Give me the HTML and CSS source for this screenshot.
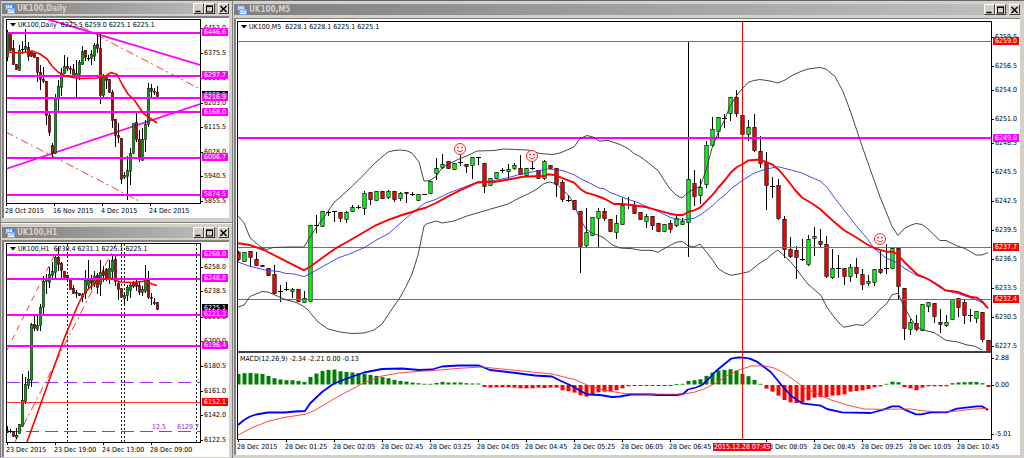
FILE: index.html
```html
<!DOCTYPE html>
<html lang="en">
<head>
<meta charset="utf-8">
<title>UK100 charts</title>
<link rel="stylesheet" href="styles.css">
</head>
<body>
<svg class="symbols" aria-hidden="true">
  <symbol id="app" viewBox="0 0 10 10"><rect width="8" height="6" fill="#5c98ea"/><rect x="1" y="1.500" width="6" height="3.500" fill="#eef5ff"/><path d="M1 4l2-1.500 1 1 2-1.500" stroke="#5c98ea" stroke-width=".7" fill="none"/><rect x="2" y="4" width="8" height="6" fill="#6ba5f0"/><rect x="3" y="5.500" width="6" height="3.500" fill="#f5f9ff"/><path d="M3 8l1.500-1.500 1.200 1.500 1.500-2 1 1.500" stroke="#4a8ade" stroke-width=".7" fill="none"/></symbol>
  <symbol id="min" viewBox="0 0 9 8"><path d="M1.500 6.500h5" stroke="#000" stroke-width="1.500"/></symbol>
  <symbol id="max" viewBox="0 0 9 8"><path d="M1 1.200h7" stroke="#000" stroke-width="1.600"/><rect x="1.500" y="1.500" width="6" height="5.500" stroke="#000" fill="none"/></symbol>
  <symbol id="close" viewBox="0 0 9 8"><path d="M1.500 1l6 6M7.500 1l-6 6" stroke="#000" stroke-width="1.400"/></symbol>
  <symbol id="drop" viewBox="0 0 6 4"><path d="M0 0h6L3 3.500z"/></symbol>
</svg>
<main class="desktop">
  <section class="window daily" aria-labelledby="t-daily">
    <header class="titlebar">
      <svg class="app-icon"><use href="#app"/></svg>
      <h2 class="title" id="t-daily">UK100,Daily</h2>
      <button class="control" aria-label="Minimize"><svg><use href="#min"/></svg></button>
      <button class="control" aria-label="Maximize"><svg><use href="#max"/></svg></button>
      <button class="control close" aria-label="Close"><svg><use href="#close"/></svg></button>
    </header>
    <div class="client" data-chart="daily">
      <div class="plot">
        <svg class="pane price" preserveAspectRatio="none"></svg>
        <p class="legend"><svg class="drop"><use href="#drop"/></svg>UK100,Daily&nbsp; 6225.5 6259.0 6225.1 6225.1</p>
      </div>
      <div class="scale"></div>
      <div class="times"></div>
    </div>
  </section>
  <section class="window hourly" aria-labelledby="t-h1">
    <header class="titlebar">
      <svg class="app-icon"><use href="#app"/></svg>
      <h2 class="title" id="t-h1">UK100,H1</h2>
      <button class="control" aria-label="Minimize"><svg><use href="#min"/></svg></button>
      <button class="control" aria-label="Maximize"><svg><use href="#max"/></svg></button>
      <button class="control close" aria-label="Close"><svg><use href="#close"/></svg></button>
    </header>
    <div class="client" data-chart="hourly">
      <div class="plot">
        <svg class="pane price" preserveAspectRatio="none"></svg>
        <p class="legend"><svg class="drop"><use href="#drop"/></svg>UK100,H1&nbsp; 6230.4 6231.1 6225.1 6225.1</p>
        <p class="note"><span>12.5</span><span>6129.7</span></p>
      </div>
      <div class="scale"></div>
      <div class="times"></div>
    </div>
  </section>
  <section class="window main" aria-labelledby="t-m5">
    <header class="titlebar">
      <svg class="app-icon"><use href="#app"/></svg>
      <h2 class="title" id="t-m5">UK100,M5</h2>
      <button class="control" aria-label="Minimize"><svg><use href="#min"/></svg></button>
      <button class="control" aria-label="Maximize"><svg><use href="#max"/></svg></button>
      <button class="control close" aria-label="Close"><svg><use href="#close"/></svg></button>
    </header>
    <div class="client" data-chart="five">
      <div class="plot">
        <svg class="pane price" preserveAspectRatio="none"></svg>
        <p class="legend"><svg class="drop"><use href="#drop"/></svg>UK100,M5&nbsp; 6228.1 6228.1 6225.1 6225.1</p>
        <div class="indicator">
          <svg class="pane macd" preserveAspectRatio="none"></svg>
          <p class="macd-label">MACD(12,26,9) -2.34 -2.21 0.00 -0.13</p>
        </div>
      </div>
      <div class="scale"></div>
      <div class="times"></div>
    </div>
  </section>
</main>
<script src="charts.js"></script>
</body>
</html>
```
FILE: styles.css
```css
* { box-sizing: border-box; }
body {
  margin: 0;
  background: #d4d0c8;
  color: #000;
  font: 7px/8px "DejaVu Sans Condensed", "DejaVu Sans", sans-serif;
}
p, h2 { margin: 0; }
.symbols { position: absolute; width: 0; height: 0; }
.desktop {
  display: grid;
  grid-template-columns: 232fr 792fr;
  grid-template-rows: 223fr 235fr;
  min-width: 600px;
  height: 100vh;
  min-height: 360px;
}
.window {
  display: flex;
  flex-direction: column;
  min-width: 0;
  min-height: 0;
  padding: 3px 3px 5px 2px;
  gap: 2px;
  background: #d4d0c8;
}
.daily, .main { box-shadow: inset 0 1px #6b6769; }
.daily, .hourly { border-left: 1px solid #808080; padding-left: 1px; }
.hourly { padding-top: 4px; padding-bottom: 1px; box-shadow: inset 0 1px #f4f2ee; }
.daily { border-bottom: 1px solid #808080; padding-bottom: 4px; }
.main { grid-column: 2; grid-row: 1 / 3; padding: 4px 4px 3px 2px; gap: 3px; box-shadow: inset 0 1px #6b6769, inset 1px 0 #808080; }

.titlebar {
  display: flex;
  align-items: center;
  flex: none;
  height: 11px;
  padding-left: 3px;
  background: linear-gradient(90deg, #808080, #c0c0c0);
}
.app-icon { width: 10px; height: 10px; margin-right: 2px; }
.title {
  flex: 1;
  color: #d4d0c8;
  font-size: 8px;
  line-height: 11px;
  font-weight: bold;
  white-space: nowrap;
}
.control {
  width: 11px;
  height: 11px;
  padding: 0;
  border: 1px solid;
  border-color: #fff #404040 #404040 #fff;
  background: #d4d0c8;
  display: grid;
  place-items: center;
}
.control svg { width: 9px; height: 8px; }
.control.close { margin-left: 3px; }

.client {
  flex: 1;
  min-height: 0;
  display: grid;
  grid-template-columns: minmax(0, 1fr) 28px;
  grid-template-rows: minmax(0, 1fr) 14px;
  padding: 1px 0 0 2px;
  border: solid #808080;
  border-width: 2px 0 0 2px;
  background: #fff;
}
.main .client {
  grid-template-rows: minmax(0, 1fr) 15px;
  border-top-width: 1px;
  padding: 2px 0 0 1px;
}
.plot {
  position: relative;
  display: grid;
  grid-template-rows: minmax(0, 1fr);
  border: 1px solid #000;
}
.main .plot { grid-template-rows: minmax(0, 329fr) minmax(0, 88fr); }
.pane { display: block; width: 100%; height: 100%; min-height: 0; }
.indicator { position: relative; min-height: 0; border-top: 2px solid #404040; }
.legend {
  position: absolute;
  top: 1px;
  left: 3px;
  display: flex;
  align-items: center;
  gap: 2px;
  white-space: nowrap;
}
.drop { width: 6px; height: 4px; }
.macd-label { position: absolute; top: 2px; left: 2px; white-space: nowrap; }
.note {
  position: absolute;
  right: 1px;
  bottom: 11px;
  display: flex;
  gap: 11px;
  color: #9c27d8;
}

.scale, .times { position: relative; }
.times { grid-column: 1 / 3; }
.tick, .tag, .time, .marker { position: absolute; white-space: nowrap; }
.tick, .tag { height: 8px; margin-top: -4px; }
.tick { left: 3px; }
.tick::before { content: ""; position: absolute; left: -3px; top: 4px; width: 2px; height: 1px; background: #000; }
.tag { left: 1px; width: 26px; padding-left: 2px; color: #fff; }
.tag-red { background: #f00; }
.tag-magenta { background: #f0f; }
.tag-black { background: #000; }
.time { top: 3px; margin-left: -1px; }
.time::before { content: ""; position: absolute; left: 1px; top: -3px; width: 1px; height: 2px; background: #000; }
.marker { top: 3px; height: 8px; padding: 0 1px; background: #f00; color: #fff; }

.wick { stroke: #000; stroke-width: 1; shape-rendering: crispEdges; }
.body-r { fill: #f00; stroke: #100; stroke-width: .7; }
.body-g { fill: #0f1; stroke: #010; stroke-width: .7; }
.daily-c .body-r, .hourly-c .body-r { fill: #b00a0a; stroke-width: .5; }
.daily-c .body-g, .hourly-c .body-g { fill: #0a9a14; stroke-width: .5; }
.line { fill: none; stroke-linejoin: round; }
.level { shape-rendering: crispEdges; }
.band { stroke: #333; stroke-width: .9; }
.slow { stroke: #33f; stroke-width: .9; }
.average { stroke: #f00; stroke-width: 1.9; }
.daily-c .average, .hourly-c .average { stroke-width: 1.6; }
.signal { stroke: #f33; stroke-width: .9; }
.force { stroke: #00f; stroke-width: 1.8; }
.smile { fill: #fff; stroke: #f22; stroke-width: 1; }
.smile-mouth { fill: none; stroke: #f22; stroke-width: 1; }
.smile-eye { fill: #f22; }
```
FILE: charts.js
```js
// Candles: colour, body top, body bottom, and optionally wick top and wick bottom.
const charts = {
  daily: {
    cls: 'daily-c', view: [7, 20, 193, 183], start: 7, step: 3, body: 2.4,
    candles: 'g 32 57 30 60;r 32 50;r 48 64 40 64;r 64 69;g 50 70 45 70;d 49 49 41 53;g 46 49 29 52;r 47 56 42 60;r 51 56;r 53 57;r 57 72 57 81;r 72 79 65 89;r 79 81 67 82;r 81 115 81 124;r 115 132 112 135;r 145 153 143 156;g 98 153 94 153;g 86 99 80 110;g 73 87 68 95;g 66 73 55 73;r 66 68 57 70;r 68 69 66 73;r 69 77 64 77;g 73 77 60 97;g 62 74 60 79;g 51 64 46 64;r 50 57 50 60;d 58 58 55 60;g 54 58 50 64;g 45 56 43 60;r 44 48 34 52;r 48 95 32 103;g 77 95 74 97;r 76 80 76 88;r 79 92;r 92 120 90 127;r 119 135 119 146;r 135 137 123 142;r 138 179 138 183;g 175 177 172 178;g 170 176 156 199;g 153 171 148 184;g 123 153;r 122 139 112 141;r 139 159 130 161;g 139 160 128 160;g 124 139 120 151;g 88 124 83 126;r 88 91 84 96;r 91 92 88 94;r 92 96 86 96',
    under: [
      ['M47 19L200 65', '#f0f', 1.8], ['M6 169L200 104', '#f0f', 1.8],
      ['M66 19L200 89', '#f33', 1, '8 3 2 4'], ['M6 132L139 201', '#f33', 1, '8 3 2 4']
    ],
    levels: [[32, '#f0f', 2], [75, '#f0f', 2], [97, '#f0f', 2], [111, '#f0f', 2], [157, '#f0f', 2], [194, '#f0f', 2]],
    lines: [['average', '7,52 20,53 32,51 40,54 47,59 52,66 58,72 65,76 80,78.5 97,78 105,76.5 111,72.5 117,74.5 123,86 128,94 135,101 143,113 147,116 157,123']],
    scale: [[28, '6453.0'], [53, '6375.5'], [78, '6290.5'], [103, '6203.0'], [127, '6115.5'], [152, '6028.0'], [176, '5940.5'], [201, '5855.5'],
      [95, '6225.1', 'black'], [32, '6446.6', 'magenta'], [75, '6297.7', 'magenta'], [97, '6216.9', 'magenta'], [112, '6168.0', 'magenta'], [157, '6006.7', 'magenta'], [194, '5874.5', 'magenta']],
    times: [[6, '28 Oct 2015'], [54, '16 Nov 2015'], [102, '4 Dec 2015'], [150, '24 Dec 2015']]
  },
  hourly: {
    cls: 'hourly-c', view: [7, 244, 193, 198], start: 7, step: 3, body: 2.4,
    candles: 'r 430 432 426 432;d 431 431 429 432;r 431 436;g 435 437 428 438;g 424 433;g 400 426 374 426;g 384 401 377 403;g 379 385 371 388;g 324 380 323 386;r 324 328 316 330;g 325 329 314 330;g 307 325 304 330;g 281 307 276 314;g 278 281 274 293;g 274 282 267 287;g 271 275 262 278;g 257 272 254 277;r 257 264 247 270;r 263 270 262 278;r 271 277;r 275 279;r 279 289;r 288 293 285 293;r 292 293 290 297;r 293 295;g 294 297 293 301;g 280 293 270 298;g 280 285 260 289;r 278 283 275 289;g 276 284 271 286;r 275 287 273 293;g 272 284 260 295;r 271 275 266 281;r 269 279 268 280;g 268 279 260 283;g 260 271 255 277;r 259 281 254 285;r 283 289 281 299;r 288 297;g 295 298 292 304;g 287 295 285 300;g 285 290 283 297;r 283 286 281 287;r 282 286 280 290;r 285 292 282 294;g 289 292 286 295;g 279 291 265 292;r 280 297 271 298;r 297 298 293 304;r 302 303 298 304;r 302 309',
    under: [
      ['M67.500 244V442M121.500 244V442M124.500 244V442M196.500 244V442', '#222', 1, '2 2'],
      ['M7 350L60 244', '#f33', 1, '6 5'], ['M15 442L116 244', '#f33', 1, '8 4 2 4'],
      ['M7 382.500H200M7 431.500H200', '#a030e8', 1, '13 6']
    ],
    levels: [[254, '#f0f', 2], [278, '#f0f', 2], [314, '#f0f', 2], [345, '#f0f', 2], [402, '#f33', 1]],
    lines: [['average', '27,442 64,339 77,307 83,295 90,287 100,280 110,278 120,282 133,282.5 145,281 152,284 157,285.5']],
    scale: [[267, '6258.0'], [291, '6238.5'], [317, '6219.0'], [341, '6200.0'], [366, '6180.5'], [391, '6161.0'], [415, '6142.0'], [440, '6122.5'],
      [308, '6225.1', 'black'], [254, '6268.0', 'magenta'], [278, '6248.8', 'magenta'], [314, '6221.3', 'magenta'], [345, '6196.4', 'magenta'], [402, '6152.1', 'red']],
    times: [[7, '23 Dec 2015'], [55, '23 Dec 19:00'], [103, '24 Dec 13:00'], [151, '28 Dec 09:00']]
  },
  five: {
    cls: 'five', view: [238, 22, 753, 329], full: [22, 417], start: 238, step: 6, body: 3.4,
    candles: 'r 252 259 251 260;g 252 261;r 251 257 251 266;r 259 265 252 265;r 265 266;r 268 275;r 274 293 265 293;d 291 291 285 301;d 289 289 282 290;g 289 291 288 297;r 289 301;g 298 302 291 302;g 225 301;d 225 225 215 232;g 211 226;d 212 212 210 215;d 211 211 211 221;r 212 218 212 221;g 212 219 211 222;g 207 211 205 211;d 207 207 205 208;g 193 208 191 214;r 192 199 192 204;g 191 200;r 191 198;g 191 197 190 198;r 191 199 191 201;g 193 198 192 200;r 192 193 192 202;d 194 194 192 195;g 194 200;d 194 194;g 181 193;g 168 173 158 179;g 164 167 154 168;r 161 168;g 163 169;d 162 162 155 165;r 164 166 164 172;g 157 165 157 178;d 157 157 157 164;r 163 186 163 192;g 178 185;g 172 178;d 170 170 168 172;g 169 171 164 178;g 165 168 163 169;r 168 174 155 174;g 168 175;d 168 168 162 169;r 170 178;g 161 178 160 179;r 165 168;r 168 184 168 196;r 182 199 180 201;d 200 200 195 201;r 200 209;r 211 246 211 272;g 232 245 208 246;g 217 235;g 211 218 208 247;r 211 218 208 220;r 219 231;g 223 232 215 238;g 205 224 198 224;d 204 204 197 208;r 205 213 201 213;r 212 219;g 216 221 214 227;r 216 225 216 229;r 223 231;g 224 231;r 223 229 220 232;g 218 225 215 226;g 221 224 218 224;g 179 222 42 256;r 183 196 170 205;g 187 195 179 203;g 145 184 141 187;g 129 145 117 146;g 117 131 117 138;d 118 118 114 127;g 97 113 97 120;r 97 113 90 116;r 115 134;g 127 134 120 140;r 127 150 114 151;r 151 163 136 167;r 162 185 152 209;d 186 186 177 197;r 185 218 179 219;r 219 249 216 257;r 249 256 237 257;r 250 257 246 278;d 259 259 239 260;g 239 264 235 265;g 236 238 227 255;r 241 244 229 247;r 244 276 236 277;g 268 277 249 278;d 268 268 255 277;r 268 276 268 284;g 267 276 264 281;r 267 273 258 277;r 274 284 269 289;g 281 283 275 285;g 269 282 269 285;r 269 272 250 273;d 268 268 244 273;g 248 268;r 248 286 248 299;r 288 328 288 339;g 322 329 319 334;r 323 329 315 330;g 304 330;g 302 306 302 311;r 303 316 303 322;r 322 324 309 332;g 322 325 315 326;g 299 319;r 298 307 298 316;r 302 315 300 323;d 315 315 309 321;g 311 318 311 322;r 312 339 312 341;r 340 351',
    under: [],
    levels: [[41, '#f33', 1], [137, '#f0f', 2], [247, '#f33', 1], [299, '#f33', 1]],
    lines: [
      ['band', '238,216 244,222.7 250,237.7 256,243 262,248 267,249.5 273,247.5 289,247 304,247 310,237 317,226.5 328,211.5 334,202.5 346,192 358,180.5 376,162 388,152 394,150.5 400,150 406,150.5 412,153 419,162 424,181 430,180.5 436,176.5 442,168 448,164 458,159.5 470,154.5 477,151 494,150.5 504,149 528,150 540,153.5 553,154.5 560,153 574,147 580,138.5 587,135.5 593,137 599,141 608,140.5 620,144.5 628,148.5 634,153.5 640,156.5 646,161 658,170.5 664,180 670,189 676,195 682,198 688,192.5 694,189 700,186.5 706,170.5 712,148 718,133 725,119 730,106 737,95 742,89 748,82.5 754,80.5 760,79.5 770,81 778,83 785,80 793,75 802,71 808,69 820,67.5 826,69 835,76.5 843,91.5 850,110 862,146 874,180 880,197 886,211.5 892,226.5 898,235.5 904,229 910,225.5 916,223.5 922,224.5 928,229 940,240.5 946,240.5 956,245.5 965,248.5 976,255 982,255 988,252.5'],
      ['band', '238,307 244,305 250,296.5 256,294 262,291.5 268,292 275,295 285,299.5 295,302 304,306.5 308,310 318,322 328,329 340,332 352,333.5 364,333 374,330 382,324 392,309 399,299 406,286.7 412,274 418,255 424,226 427,223.7 436,221 442,223 454,221 466,216.3 484,211 508,204 517,199 528,194 537,189 544,183.5 550,182 556,183.7 563,190 570,197 575,207 580,219 586,229 592,233 599,235.5 604,238 612,244.7 620,248 632,248.7 641,250.3 652,250.3 658,252.3 664,248.7 676,242.3 682,241.3 688,245.7 694,247 700,244 707,252.7 713,260.7 718,268.3 725,273 731,275.3 740,273.7 749,271.7 760,263 767,258.7 773,253.3 778,250 784,255.7 790,261.3 796,268.3 802,276.7 808,284 814,289.3 821,295.3 827,307.3 833,315.7 839,323 844,327.3 856,324.7 863,325.3 868,321.7 875,315 880,309.3 887,303.3 892,294.7 898,293.3 904,306.7 910,317.3 916,326 922,329.7 934,332.7 940,336.3 946,340.3 958,342 966,344.7 975,346.3 982,350'],
      ['slow', '238,262 250,266.3 265,270 280,271.7 285,273.3 294,274 304,276.7 310,273.7 338,258 352,253 364,247.7 376,240.3 389,233.3 405,219 415,210.7 425,203 435,199.7 448,193.3 460,188.7 478,181.7 490,181.3 508,177.7 520,174.3 535,171.3 548,169 557,169.7 563,170.7 574,174.7 580,178.3 593,184.7 599,188 604,188.7 610,192.5 628,199.3 637,202.3 647,206.7 658,211.3 670,217.3 677,219.3 683,220 694,218.3 700,215 707,210 713,205.3 718,200.3 725,195 731,188.7 743,180 753,173.7 760,171 768,168.7 778,166.7 790,169.7 802,173 812,177.7 820,181 827,187.3 835,198.5 844,210 857,226.7 867,238.3 874,248.3 886,258 898,263.3 904,268 917,275.7 928,279.3 940,287.7 947,290.7 958,293.7 970,297.7 977,300 983,303.3 988,307.7'],
      ['average', '238,243.3 250,245 264,250 304,270.3 310,266.7 335,248.7 347,242 359,235 375,225.7 389,219.7 402,215 412,212 419,209.5 425,208 436,203 448,196.3 460,190.3 477,182.7 484,181.7 494,182 510,179.3 523,176.7 535,176.3 545,176 548,174.3 556,175.3 563,178.3 574,182.7 580,188.7 586,192.7 593,194.7 600,197 605,199 614,204 622,204 634,205.3 647,207.3 658,210.3 670,213.7 677,215 683,215 688,212 694,210.3 700,207.7 713,194.3 718,188 725,180 731,172.3 737,167 743,164 748,160.5 760,159.5 772,164.3 779,170 787,179.5 795,190 802,197.5 812,203.5 820,209 832,220 844,230.3 856,237.3 868,245 875,248.3 886,251.7 893,251.7 898,255 904,261.7 917,274.3 928,279 940,286.3 945,290.3 958,292 970,296.7 977,297.7 983,302.3 988,308.3']
    ],
    vertical: 742,
    smiles: [[460, 149], [532, 156], [880, 239]],
    macd: {
      view: [238, 353, 753, 86],
      // Histogram heights from the zero line; negative values hang below it.
      bars: '10.5 11.3 11.6 11 10.6 8.6 6.3 5 4.3 4.3 3.6 2.6 7.6 11 13.6 14.6 15 13.3 12.6 12 11.3 10.6 9.6 8.6 7.3 6.3 4.6 3.6 3 2 1.3 .7 .7 1.6 2.6 2 2 2 1.3 1 1 -2 -2.6 -2.3 -2.3 -2.3 -2.6 -3.3 -3.3 -3.3 -2.6 -3 -2.6 -2.6 -5.3 -6.3 -7.6 -10.3 -11.6 -9.6 -7.3 -6.6 -6.3 -5.3 -3.3 -1.3 -1 -1 -1 -1 -1 -1 -1 .5 .7 3.6 4.3 5.3 8.6 12 14 14.6 15.3 14 10.6 8.3 4.6 .7 -3.6 -6.6 -10.6 -15 -17.3 -18 -17.6 -15.3 -12.6 -12 -12 -10.6 -10.3 -9.3 -6.6 -6 -5.3 -4 -2.3 -1.3 .7 2.8 2.3 -2 -3.3 -5.3 -2.6 -1.3 -1.3 -1.3 -1.3 1.3 2 2.3 2.6 2.6 1.3 -2',
      lines: [
        ['force', '238,425 244,420 250,416.5 256,414.5 268,412.5 285,412.5 295,411.5 305,411 310,403.5 322,392 334,383.5 347,378.5 364,372.5 382,369 402,368.5 419,370 432,369.5 442,366.5 459,365.5 479,365.5 490,370 512,372.5 535,375.5 552,376.5 560,380.5 572,386 587,394.5 600,395 612,397 620,396.5 631,394.5 651,394.5 657,395 677,395 683,394 688,389.5 696,387.5 702,385 707,380.5 716,371 724,364.5 731,358.7 739,357.3 749,358.3 757,361.7 771,372.3 782,385.7 791,395.7 802,403.3 821,405.7 827,409 842,412.3 871,413 884,409.3 892,406.3 899,406.3 904,409.3 916,414.3 921,414.3 931,412.3 947,412.3 957,408.7 977,406.3 982,406.3 988,410'],
        ['signal', '238,435 252,427.7 269,421 285,417.3 305,414.3 315,410.3 332,400 349,390.7 365,382.3 382,376 399,373 419,371.3 432,370.7 459,368.3 482,367 509,369.7 535,372.3 552,374 575,379.7 590,386.3 605,390.3 625,393.7 644,394 681,394.3 694,392.3 704,389 716,383 727,375.7 739,370 751,366 764,365.7 774,368 784,373 794,380 804,387.7 817,394 831,400 847,405 864,409 881,409.3 911,409 924,411 944,412 957,411 974,409 988,408.3']
      ]
    },
    scale: [[37, '6259.5'], [66, '6256.5'], [90, '6254.0'], [119, '6251.0'], [143, '6248.5'], [172, '6245.5'], [201, '6242.5'], [230, '6239.5'], [259, '6236.5'], [288, '6233.5'], [317, '6230.5'], [346, '6227.5'], [358, '2.88'], [385, '0.00'], [434, '-5.01'],
      [41, '6259.0', 'red'], [138, '6249.0', 'magenta'], [247, '6237.7', 'red'], [299, '6232.4', 'red']],
    times: [[238, '28 Dec 2015'], [286, '28 Dec 01:25'], [334, '28 Dec 02:05'], [382, '28 Dec 02:45'], [430, '28 Dec 03:25'], [478, '28 Dec 04:05'], [526, '28 Dec 04:45'], [574, '28 Dec 05:25'], [622, '28 Dec 06:05'], [670, '28 Dec 06:45'],
      [766, '28 Dec 08:05'], [814, '28 Dec 08:45'], [862, '28 Dec 09:25'], [910, '28 Dec 10:05'], [958, '28 Dec 10:45']],
    marker: [713, '2015.12.28 07:45']
  }
};

const polylines = (list) => list.map(([cls, pts]) => `<polyline class="line ${cls}" points="${pts}"/>`).join('');

function candles(chart) {
  const w = chart.body;
  return chart.candles.split(';').map((entry, i) => {
    const [kind, ...n] = entry.split(' ');
    const [top, bottom, high = top, low = bottom] = n.map(Number);
    const x = chart.start + i * chart.step;
    const wick = high < low ? `<path class="wick" d="M${x + 0.5} ${high}V${low + 1}"/>` : '';
    const body = kind === 'd'
      ? `<path class="wick" d="M${x - w / 2} ${top + 0.5}h${w + 1}"/>`
      : `<rect class="body-${kind}" x="${x + 0.5 - w / 2}" y="${top + 0.4}" width="${w}" height="${Math.max(bottom - top, 1)}"/>`;
    return wick + body;
  }).join('');
}

function smile([x, y]) {
  return `<circle class="smile" cx="${x}" cy="${y}" r="5.500"/>
    <circle class="smile-eye" cx="${x - 2}" cy="${y - 1.5}" r=".9"/><circle class="smile-eye" cx="${x + 2}" cy="${y - 1.5}" r=".9"/>
    <path class="smile-mouth" d="M${x - 3} ${y + 1}q3 3.600 6 0"/>`;
}

for (const client of document.querySelectorAll('[data-chart]')) {
  const chart = charts[client.dataset.chart];
  const [vx, vy, vw, vh] = chart.view;
  const price = client.querySelector('.price');
  price.setAttribute('viewBox', chart.view.join(' '));
  price.classList.add(chart.cls);
  price.innerHTML =
    chart.under.map(([d, colour, width, dash]) => `<path class="line" d="${d}" stroke="${colour}" stroke-width="${width}"${dash ? ` stroke-dasharray="${dash}"` : ''}/>`).join('') +
    candles(chart) +
    chart.levels.map(([y, colour, h]) => `<rect class="level" x="${vx}" y="${y}" width="${vw}" height="${h}" fill="${colour}"/>`).join('') +
    (chart.vertical ? `<rect class="level" x="${chart.vertical}" y="${vy}" width="1" height="${vh}" fill="#f00"/>` : '') +
    polylines(chart.lines) +
    (chart.smiles || []).map(smile).join('');

  if (chart.macd) {
    const { view, bars, lines } = chart.macd;
    const pane = client.querySelector('.macd');
    pane.setAttribute('viewBox', view.join(' '));
    pane.innerHTML = bars.split(' ').map((value, i) => {
      const v = Number(value);
      const y = v > 0 ? 384.5 - v : 385;
      return `<rect x="${chart.start + i * chart.step - 1.5}" y="${y}" width="4" height="${Math.max(Math.abs(v), 0.8)}" fill="${v > 0 ? '#008000' : '#f00'}"/>`;
    }).join('') + polylines(lines) +
      `<rect class="level" x="${chart.vertical}" y="${view[1]}" width="1" height="${view[3]}" fill="#f00"/>`;
  }

  const [fy, fh] = chart.full || [vy, vh];
  client.querySelector('.scale').innerHTML = chart.scale.map(([y, text, tag]) =>
    `<span class="${tag ? `tag tag-${tag}` : 'tick'}" style="top:${((y - fy + 1) / (fh + 2) * 100).toFixed(3)}%">${text}</span>`).join('');
  const across = (x) => ((x - vx + 1) / (vw + 2 + 28) * 100).toFixed(3);
  client.querySelector('.times').innerHTML = chart.times.map(([x, text]) => `<span class="time" style="left:${across(x)}%">${text}</span>`).join('') +
    (chart.marker ? `<span class="marker" style="left:${across(chart.marker[0])}%">${chart.marker[1]}</span>` : '');
}
```
